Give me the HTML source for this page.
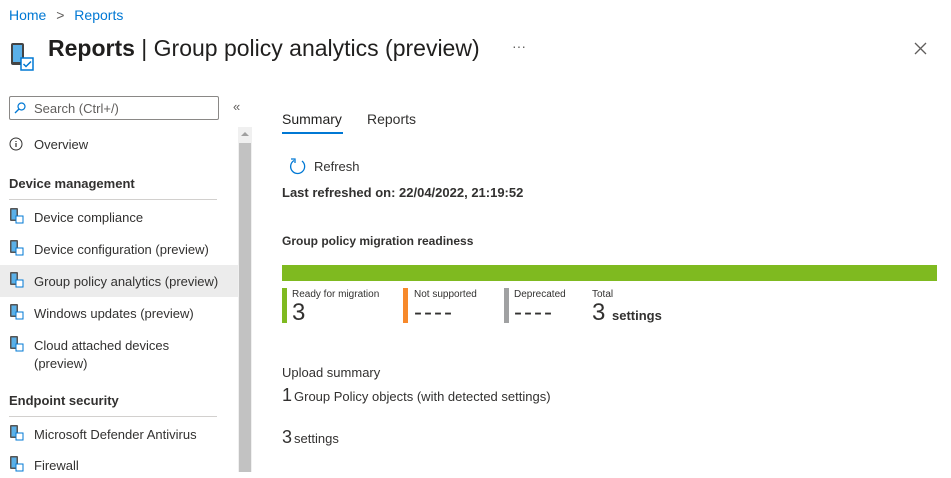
<html><head><style>
body{margin:0;width:951px;height:472px;overflow:hidden;background:#fff;font-family:"Liberation Sans",sans-serif;color:#323130;position:relative}
.a{position:absolute;white-space:nowrap}
.dev{position:absolute;width:11px;height:15px}
.nav{font-size:13px}
</style></head><body>
<div class="a" style="left:9px;top:7px;font-size:14px;color:#0078d4">Home <span style="color:#605e5c;margin:0 6px">&gt;</span> Reports</div>
<svg class="a" style="left:10px;top:42px" width="26" height="30"><rect x="1" y="1" width="13" height="22" rx="2" fill="#444"/><rect x="3" y="3" width="9" height="17" fill="#5ab0e8"/><rect x="11" y="16" width="12" height="12" fill="#fff" stroke="#0078d4" stroke-width="1.5"/><path d="M13.5 22l2.5 2.5 5-5" stroke="#0078d4" stroke-width="1.5" fill="none"/></svg>
<div class="a" style="left:48px;top:35px;font-size:23px;color:#201f1e"><b>Reports</b> | Group policy analytics (preview)</div>
<div class="a" style="left:512px;top:38px;font-size:14px;color:#605e5c">···</div>
<svg class="a" style="left:914px;top:42px" width="13" height="13"><path d="M1 1l11 11M12 1L1 12" stroke="#605e5c" stroke-width="1.3"/></svg>
<div class="a" style="left:9px;top:96px;width:208px;height:22px;border:1px solid #8a8886;border-radius:2px"></div>
<svg class="a" style="left:14px;top:102px" width="12" height="12"><circle cx="7.5" cy="4.5" r="3.5" stroke="#0078d4" fill="none" stroke-width="1.2"/><path d="M5 7L1 11" stroke="#0078d4" stroke-width="1.3"/></svg>
<div class="a nav" style="left:34px;top:101px;color:#605e5c">Search (Ctrl+/)</div>
<div class="a" style="left:233px;top:99px;font-size:13px;color:#605e5c">«</div>
<div class="a" style="left:238px;top:127px;width:14px;height:345px;background:#f0f0f0"></div>
<div class="a" style="left:239px;top:143px;width:12px;height:329px;background:#c2c2c2"></div>
<div class="a" style="left:241px;top:132px;border:4px solid transparent;border-bottom:4px solid #a0a0a0;border-top:0"></div>
<svg class="a" style="left:9px;top:137px" width="14" height="14"><circle cx="7" cy="7" r="6" stroke="#323130" fill="none"/><path d="M7 6v4M7 4v1" stroke="#323130" stroke-width="1.2"/></svg>
<div class="a nav" style="left:34px;top:137px">Overview</div>
<div class="a nav" style="left:9px;top:176px;font-weight:bold">Device management</div>
<div class="a" style="left:9px;top:199px;width:208px;height:1px;background:#d2d0ce"></div>
<div class="a" style="left:0;top:265px;width:238px;height:32px;background:#ececec"></div>
<div class="a nav" style="left:34px;top:210px">Device compliance</div>
<div class="a nav" style="left:34px;top:242px">Device configuration (preview)</div>
<div class="a nav" style="left:34px;top:274px">Group policy analytics (preview)</div>
<div class="a nav" style="left:34px;top:306px">Windows updates (preview)</div>
<div class="a nav" style="left:34px;top:337px;line-height:18px">Cloud attached devices<br>(preview)</div>
<div class="a nav" style="left:9px;top:393px;font-weight:bold">Endpoint security</div>
<div class="a" style="left:9px;top:416px;width:208px;height:1px;background:#d2d0ce"></div>
<div class="a nav" style="left:34px;top:427px">Microsoft Defender Antivirus</div>
<div class="a nav" style="left:34px;top:458px">Firewall</div>
<svg class="a" style="left:10px;top:208px" width="14" height="270">
<g id="d"><rect x="0" y="0" width="8" height="13" rx="1" fill="#555"/><rect x="1.5" y="1.5" width="5" height="10" fill="#5ab0e8"/><rect x="6" y="8" width="7" height="7" fill="#fff" stroke="#0078d4"/></g>
<use href="#d" y="32"/><use href="#d" y="64"/><use href="#d" y="96"/><use href="#d" y="128"/><use href="#d" y="217"/><use href="#d" y="248"/>
</svg>
<div class="a" style="left:282px;top:111px;font-size:14px;color:#201f1e">Summary</div>
<div class="a" style="left:282px;top:132px;width:61px;height:2px;background:#0078d4"></div>
<div class="a" style="left:367px;top:111px;font-size:14px">Reports</div>
<svg class="a" style="left:289px;top:157px" width="18" height="18"><path d="M13 4A7 7 0 1 1 5 3.5" stroke="#0078d4" fill="none" stroke-width="1.3"/><path d="M2 2h4v4" stroke="#0078d4" fill="none" stroke-width="1.3"/></svg>
<div class="a nav" style="left:314px;top:159px">Refresh</div>
<div class="a nav" style="left:282px;top:185px;font-weight:bold">Last refreshed on: 22/04/2022, 21:19:52</div>
<div class="a" style="left:282px;top:234px;font-size:12px;font-weight:bold">Group policy migration readiness</div>
<div class="a" style="left:282px;top:265px;width:655px;height:16px;background:#7fba20"></div>
<div class="a" style="left:282px;top:288px;width:5px;height:35px;background:#7fba20"></div>
<div class="a" style="left:403px;top:288px;width:5px;height:35px;background:#f7892b"></div>
<div class="a" style="left:504px;top:288px;width:5px;height:35px;background:#a0a1a2"></div>
<div class="a" style="left:292px;top:289px;font-size:10px">Ready for migration</div>
<div class="a" style="left:414px;top:289px;font-size:10px">Not supported</div>
<div class="a" style="left:514px;top:289px;font-size:10px">Deprecated</div>
<div class="a" style="left:592px;top:289px;font-size:10px">Total</div>
<div class="a" style="left:292px;top:299px;font-size:24px">3</div>
<div class="a" style="left:414px;top:299px;font-size:24px;letter-spacing:2px">----</div>
<div class="a" style="left:514px;top:299px;font-size:24px;letter-spacing:2px">----</div>
<div class="a" style="left:592px;top:299px;font-size:24px">3 <span style="font-size:13px;font-weight:bold">settings</span></div>
<div class="a nav" style="left:282px;top:365px">Upload summary</div>
<div class="a" style="left:282px;top:385px;font-size:18px">1 <span style="font-size:13px;margin-left:-3px">Group Policy objects (with detected settings)</span></div>
<div class="a" style="left:282px;top:427px;font-size:18px">3 <span style="font-size:13px;margin-left:-3px">settings</span></div>
</body></html>
